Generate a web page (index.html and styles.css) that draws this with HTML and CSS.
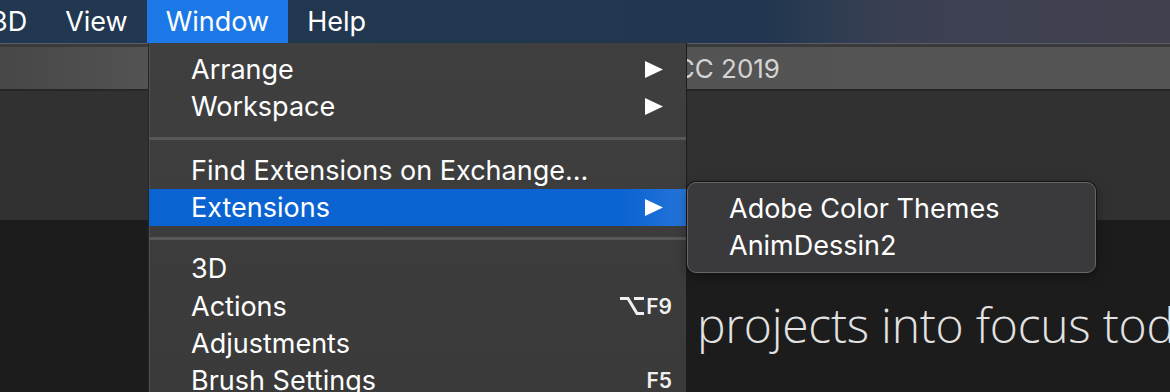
FILE: index.html
```html
<!DOCTYPE html>
<html lang="en">
<head>
<meta charset="utf-8">
<title>Photoshop Window menu</title>
<link rel="stylesheet" href="styles.css">
</head>
<body>
<div class="app">
  <header class="menubar">
    <span class="menubar-item first">3D</span>
    <span class="menubar-item">View</span>
    <span class="menubar-item active">Window</span>
    <span class="menubar-item">Help</span>
  </header>
  <div class="tabbar"><span class="doc-title">Adobe Photoshop CC 2019</span></div>
  <div class="panel"></div>
  <div class="canvas"><p class="tagline">projects into focus today</p></div>
</div>

<div class="dropdown">
  <div class="row"><span class="label">Arrange</span><svg class="arrow" viewBox="0 0 18 17"><polygon points="0,0 18,8.5 0,17"/></svg></div>
  <div class="row"><span class="label">Workspace</span><svg class="arrow" viewBox="0 0 18 17"><polygon points="0,0 18,8.5 0,17"/></svg></div>
  <div class="sep sep-a"></div>
  <div class="row"><span class="label">Find Extensions on Exchange...</span></div>
  <div class="row selected"><span class="label">Extensions</span><svg class="arrow" viewBox="0 0 18 17"><polygon points="0,0 18,8.5 0,17"/></svg></div>
  <div class="sep sep-b"></div>
  <div class="row"><span class="label">3D</span></div>
  <div class="row"><span class="label">Actions</span><span class="shortcut"><svg class="opt" viewBox="0 0 24 20"><path d="M0 2.5 H8 L17 17.5 H24 M14 2.5 H24"/></svg>F9</span></div>
  <div class="row"><span class="label">Adjustments</span></div>
  <div class="row"><span class="label">Brush Settings</span><span class="shortcut">F5</span></div>
</div>

<div class="submenu">
  <div class="row sub-row"><span class="label">Adobe Color Themes</span></div>
  <div class="row sub-row"><span class="label">AnimDessin2</span></div>
</div>
</body>
</html>
```

FILE: styles.css
```css
* { box-sizing: border-box; margin: 0; padding: 0; }

html, body {
  width: 1170px;
  height: 392px;
  overflow: hidden;
  background: #1c1c1c;
  font-family: "Inter", "Liberation Sans", sans-serif;
}

.app {
  display: flex;
  flex-direction: column;
  width: 1170px;
  height: 392px;
}

/* top menu bar */
.menubar {
  height: 44px;
  display: flex;
  align-items: stretch;
  background: linear-gradient(90deg, #213850 0%, #22374f 66%, #2c3b52 70%, #3b4052 77%, #41404e 100%);
  box-shadow: inset 0 -1px 0 #5b5d69;
  color: #ffffff;
  font-size: 27px;
}

.menubar-item {
  display: flex;
  align-items: center;
  height: 43px;
  padding: 0 19px;
}

.menubar-item.first { margin-left: -28px; }

.menubar-item.active { background: #1b78e6; }

/* document tab bar */
.tabbar {
  height: 47px;
  border-top: 3px solid #3a3a3a;
  border-bottom: 2px solid #262626;
  background: linear-gradient(90deg, #474747 0%, #535353 13%, #545454 100%);
  display: flex;
  align-items: center;
  justify-content: flex-end;
  padding-right: 390px;
}

.doc-title {
  color: #d4d4d4;
  font-size: 26px;
  white-space: nowrap;
}

.panel {
  height: 129px;
  background: #313131;
}

.canvas {
  flex: 1;
  background: #1c1c1c;
  padding: 81px 0 0 697px;
  overflow: hidden;
}

.tagline {
  font-family: "Open Sans", "Lato", sans-serif;
  font-weight: 300;
  font-size: 48px;
  line-height: 48px;
  letter-spacing: -0.25px;
  color: #e2e2e2;
  white-space: nowrap;
}

/* dropdown menu */
.dropdown {
  position: absolute;
  left: 148px;
  top: 43px;
  width: 539px;
  height: 360px;
  background: linear-gradient(180deg, #3f3f3f 0%, #3a3a3a 100%);
  border-left: 1px solid #262626;
  border-right: 1px solid #1c1c1c;
  box-shadow: inset 1px 0 0 #4e4e4e;
  padding-top: 8px;
  color: #ffffff;
  font-size: 27px;
}

.row {
  height: 37.33px;
  display: flex;
  align-items: center;
  padding-left: 42px;
  padding-right: 23px;
  white-space: nowrap;
}

.row .label { flex: 1; }

.row.selected {
  background: linear-gradient(90deg, #0a63d1 0%, #0b64d2 88%, #2574d8 100%);
}

.arrow {
  width: 18px;
  height: 17px;
  fill: #ffffff;
}

.sep {
  height: 3px;
  background: #585858;
}

.sep-a { margin: 11.5px 0 11.5px; }
.sep-b { margin: 11px 0 10px; }

.shortcut {
  display: flex;
  align-items: center;
  gap: 2px;
  margin-right: -9px;
  font-size: 21px;
  font-weight: 600;
  color: #f0f0f0;
}

.opt {
  width: 24px;
  height: 20px;
  fill: none;
  stroke: #f0f0f0;
  stroke-width: 3px;
}

/* extensions submenu */
.submenu {
  position: absolute;
  left: 687px;
  top: 182px;
  width: 409px;
  height: 91px;
  background: #3a3a3c;
  border: 1px solid #676769;
  border-radius: 9px;
  box-shadow: 0 0 0 1px #141414, 0 4px 12px rgba(0, 0, 0, 0.35);
  padding-top: 7px;
  color: #ffffff;
  font-size: 27px;
}

.sub-row { padding-left: 41px; }
```
